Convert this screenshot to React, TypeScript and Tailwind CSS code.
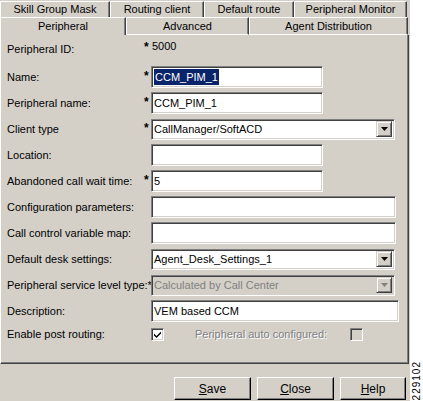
import React from 'react';

const sunken =
  'border border-t-[#808080] border-l-[#808080] border-b-white border-r-white shadow-[inset_1px_1px_0_#404040,inset_-1px_-1px_0_#d4d0c8]';
const raised =
  'border border-t-[#d4d0c8] border-l-[#d4d0c8] border-b-[#404040] border-r-[#404040] shadow-[inset_1px_1px_0_#ffffff,inset_-1px_-1px_0_#808080]';

function Tab({ label, w, selected, bottom }: { label: string; w: string; selected?: boolean; bottom?: boolean }) {
  return (
    <div
      className={`${w} h-full flex items-center justify-center border-t border-l border-white border-r border-r-[#404040] shadow-[inset_-1px_0_0_#808080] ${
        bottom ? 'border-b border-b-white' : ''
      } ${selected ? 'pb-[1px]' : ''}`}
    >
      {label}
    </div>
  );
}

function Row({
  label,
  star,
  children,
  h = 'h-[26px]',
}: {
  label: string;
  star?: boolean;
  children?: React.ReactNode;
  h?: string;
}) {
  return (
    <div className={`flex items-center ${h}`}>
      <div className="w-[137px] whitespace-nowrap">{label}</div>
      <div className="w-[7px] text-[12px] font-bold leading-none -mt-[3px]">{star ? '*' : ''}</div>
      {children}
    </div>
  );
}

function Input({ w, children }: { w: string; children?: React.ReactNode }) {
  return <div className={`${w} h-[22px] bg-white ${sunken} flex items-center pl-[2px] whitespace-nowrap`}>{children}</div>;
}

function Select({ w, value, disabled }: { w: string; value: string; disabled?: boolean }) {
  return (
    <div
      className={`${w} h-[21px] ${disabled ? 'bg-[#d4d0c8] text-[#808080]' : 'bg-white'} ${sunken} flex items-center pl-[2px] pr-[2px]`}
    >
      <span className="flex-1 whitespace-nowrap">{value}</span>
      <div className={`w-[16px] h-[16px] bg-[#d4d0c8] ${raised} flex items-center justify-center`}>
        <svg width="7" height="4" viewBox="0 0 7 4">
          <path d="M0 0h7L3.5 4z" fill={disabled ? '#808080' : '#000'} />
        </svg>
      </div>
    </div>
  );
}

function Check({ checked, disabled }: { checked?: boolean; disabled?: boolean }) {
  return (
    <div className={`w-[13px] h-[13px] ${disabled ? 'bg-[#d4d0c8]' : 'bg-white'} ${sunken} flex items-center justify-center`}>
      {checked && (
        <svg width="7" height="7" viewBox="0 0 7 7">
          <path d="M0 2.5l2.5 2.5L7 0.5v2L2.5 7 0 4.5z" fill="#000" />
        </svg>
      )}
    </div>
  );
}

function Button({ first, rest, w }: { first: string; rest: string; w: string }) {
  return (
    <div
      className={`${w} h-[23px] flex items-center justify-center border border-t-white border-l-white border-b-black border-r-black shadow-[inset_-1px_-1px_0_#808080] text-[12px]`}
    >
      <span>
        <span className="underline">{first}</span>
        {rest}
      </span>
    </div>
  );
}

export default function App() {
  return (
    <div className="w-[423px] h-[401px] bg-white flex overflow-hidden text-[11px] text-black font-['Liberation_Sans',Arial,sans-serif]">
      <div className="w-[410px] h-full bg-[#d4d0c8] flex flex-col">
        {/* Tabs, back row */}
        <div className="flex h-[17px] pt-[1px] pr-[3px]">
          <Tab label="Skill Group Mask" w="w-[110px]" />
          <Tab label="Routing client" w="w-[94px]" />
          <Tab label="Default route" w="w-[90px]" />
          <Tab label="Peripheral Monitor" w="w-[113px]" />
        </div>
        {/* Tabs, front row */}
        <div className="flex h-[18px] pr-[2px]">
          <Tab label="Peripheral" w="w-[126px]" selected />
          <Tab label="Advanced" w="w-[123px]" bottom />
          <Tab label="Agent Distribution" w="w-[159px]" bottom />
        </div>

        {/* Panel */}
        <div className="h-[329px] mr-[1px] border-l border-white border-r border-r-[#404040] border-b border-b-[#404040] shadow-[inset_-1px_-1px_0_#808080] pl-[6px]">
          <Row label="Peripheral ID:" h="h-[29px]">
            <span className="text-[12px] font-bold leading-none -mt-[6px] -ml-[7px] w-[7px]">*</span>
            <span className="-mt-[6px] ml-[1px]">5000</span>
          </Row>
          <Row label="Name:" star>
            <Input w="w-[172px]">
              <span className="bg-[#0a246a] text-white px-[1px]">CCM_PIM_1</span>
            </Input>
          </Row>
          <Row label="Peripheral name:" star>
            <Input w="w-[172px]">CCM_PIM_1</Input>
          </Row>
          <Row label="Client type" star>
            <Select w="w-[244px]" value="CallManager/SoftACD" />
          </Row>
          <Row label="Location:">
            <Input w="w-[172px]" />
          </Row>
          <Row label="Abandoned call wait time:" star>
            <Input w="w-[172px]">5</Input>
          </Row>
          <Row label="Configuration parameters:">
            <Input w="w-[245px]" />
          </Row>
          <Row label="Call control variable map:">
            <Input w="w-[245px]" />
          </Row>
          <Row label="Default desk settings:">
            <Select w="w-[244px]" value="Agent_Desk_Settings_1" />
          </Row>
          <Row label="Peripheral service level type:*">
            <Select w="w-[244px]" value="Calculated by Call Center" disabled />
          </Row>
          <Row label="Description:">
            <Input w="w-[248px]">VEM based CCM</Input>
          </Row>
          <Row label="Enable post routing:" h="h-[20px]">
            <Check checked />
            <span className="ml-[31px] w-[155px] text-[#808080] [text-shadow:1px_1px_0_#ffffff] whitespace-nowrap">
              Peripheral auto configured:
            </span>
            <Check disabled />
          </Row>
        </div>

        {/* Buttons */}
        <div className="flex pt-[13px] pl-[174px] gap-[6px]">
          <Button first="S" rest="ave" w="w-[77px]" />
          <Button first="C" rest="lose" w="w-[77px]" />
          <Button first="H" rest="elp" w="w-[66px]" />
        </div>
      </div>

      {/* Figure number */}
      <div className="flex-1 flex items-end justify-center pb-[1px]">
        <span className="[writing-mode:vertical-rl] rotate-180 text-[10px] leading-none tracking-[1px]">229102</span>
      </div>
    </div>
  );
}
